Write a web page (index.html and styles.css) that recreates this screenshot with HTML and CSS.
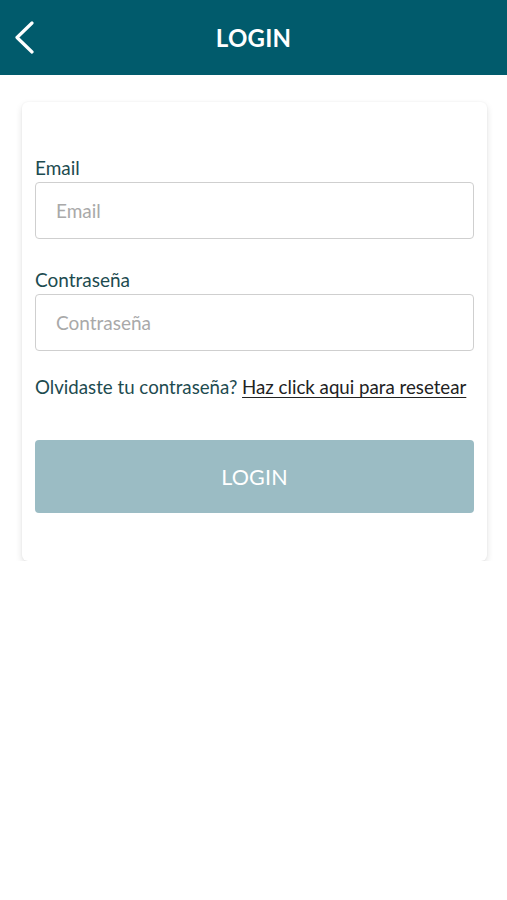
FILE: index.html
```html
<!DOCTYPE html>
<html lang="es">
<head>
<meta charset="utf-8">
<title>Login</title>
<link rel="stylesheet" href="styles.css">
</head>
<body>
<header class="topbar">
  <button class="back" aria-label="Volver">
    <svg width="24" height="34" viewBox="0 0 24 34"><path d="M19 2 L4 16.5 L19 31" fill="none" stroke="#fff" stroke-width="3.2" stroke-linecap="round" stroke-linejoin="round"/></svg>
  </button>
  <h1 class="title">LOGIN</h1>
</header>
<main class="card">
  <div class="field">
    <label class="label" for="email">Email</label>
    <input class="input" id="email" type="email" placeholder="Email">
  </div>
  <div class="field">
    <label class="label" for="pass">Contraseña</label>
    <input class="input" id="pass" type="password" placeholder="Contraseña">
  </div>
  <p class="forgot">Olvidaste tu contraseña? <a href="#" class="reset">Haz click aqui para resetear</a></p>
  <button class="login">LOGIN</button>
</main>
</body>
</html>
```
FILE: styles.css
```css
* { box-sizing: border-box; }
html, body { margin: 0; padding: 0; background: #fff; }
body { font-family: Lato, "Open Sans", sans-serif; }
.topbar {
  height: 75px;
  background: #015b6c;
  display: flex;
  align-items: center;
  justify-content: center;
  position: relative;
}
.back {
  position: absolute;
  left: 13px;
  top: 21px;
  padding: 0;
  border: 0;
  background: none;
  display: flex;
}
.title {
  margin: 0;
  color: #fff;
  font-size: 24px;
  font-weight: 700;
  letter-spacing: 0.2px;
}
.card {
  margin: 27px 20px 0 22px;
  padding: 55px 13px 48px;
  background: #fff;
  border-radius: 6px;
  box-shadow: 0 3px 7px rgba(0,0,0,0.12), 0 0 2px rgba(0,0,0,0.05);
  display: flex;
  flex-direction: column;
}
.field { display: flex; flex-direction: column; gap: 3px; margin-bottom: 30px; }
.field + .field { margin-bottom: 25px; }
.label {
  font-size: 19px;
  line-height: 22px;
  color: #1d4b50;
}
.input {
  height: 57px;
  border: 1.5px solid #cfcfcf;
  border-radius: 4px;
  padding: 0 20px;
  font-family: inherit;
  font-size: 19px;
  color: #333;
  background: #fff;
}
.input::placeholder { color: #a9a9a9; }
.forgot {
  margin: 0 0 42px;
  font-size: 18.7px;
  line-height: 22px;
  color: #1d4b50;
  white-space: nowrap;
}
.reset { color: #222; text-decoration: underline; text-underline-offset: 3px; }
.login {
  height: 73px;
  border: 0;
  border-radius: 4px;
  background: #9bbcc4;
  color: #fff;
  font-family: inherit;
  font-size: 21.5px;
  letter-spacing: 0.2px;
}
```
